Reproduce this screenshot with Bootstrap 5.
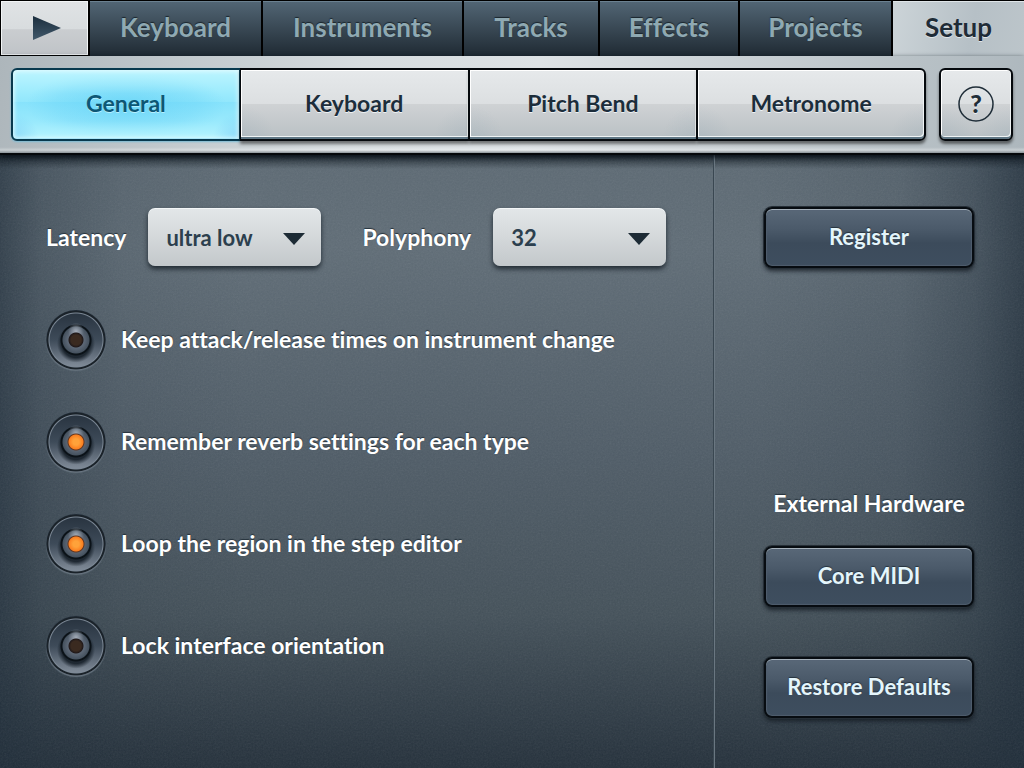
<!DOCTYPE html>
<html lang="en">
<head>
<meta charset="utf-8">
<meta name="viewport" content="width=device-width, initial-scale=1">
<title>Setup</title>
<link href="https://cdn.jsdelivr.net/npm/bootstrap@5.3.0/dist/css/bootstrap.min.css" rel="stylesheet">
<style>
  body {
    font-family: Lato, "Open Sans", sans-serif;
    font-weight: 700;
    font-size: 23px;
    line-height: 30px;
    font-variant-ligatures: none;
    color: #fff;
    background: #26323e;
  }

  /* top row of sections */
  .top-tabs {
    display: grid;
    grid-template-columns: 88fr 171fr 199fr 134fr 138fr 151fr 131fr;
    column-gap: 2px;
    height: 56px;
    padding-top: 1px;
    background: #000;
  }
  .top-tabs > * {
    display: flex;
    align-items: center;
    justify-content: center;
    padding: 0 0 4px;
    border: 0;
    border-radius: 0;
    font-size: 26px;
    text-decoration: none;
    color: #8fa9b2;
    text-shadow: 0 -1px 1px #1a252d;
    background: linear-gradient(#526675, #394854 50%, #1f2a33);
    box-shadow: inset 0 1px #6b8190;
  }
  .top-tabs > .active {
    color: #1f2c37;
    text-shadow: 0 1px #dfe5e8;
    background: linear-gradient(100deg, #ccd4d8, #b6c0c6 60%, #bcc5ca);
    box-shadow: inset 0 1px #dfe5e8;
  }
  .top-tabs > .play-btn {
    margin: 0 0 1px 1px;
    padding: 0 0 0 5px;
    background: linear-gradient(#e0e3e5, #d8dcde 52%, #cacdd0 53%, #bfc3c7);
    box-shadow: inset 0 0 0 1px #f2f5f6;
  }

  /* silver strip with the setup pages */
  .sub-bar {
    gap: 13px;
    padding: 12px 11px;
    border-bottom: 2px solid #05080b;
    background:
      linear-gradient(#fff0 94%, #ffffff50 97%, #8a9297),
      linear-gradient(100deg, #adb6bb, #d6dcdf 35%, #dde2e5 52%, #b8c1c6 88%, #adb7bd);
    box-shadow: 0 2px 5px #0b131a;
  }
  .sub-tabs { display: grid; grid-template-columns: repeat(4, 1fr); }
  .sub-tabs > *, .help-btn {
    display: flex;
    align-items: center;
    justify-content: center;
    height: 73px;
    padding: 0 0 4px;
    border: solid #05090d;
    border-width: 2px 1px;
    font-weight: 700;
    color: #1c2d3b;
    text-decoration: none;
    text-shadow: 0 1px #eef2f4;
    background:
      radial-gradient(circle at 0 100%, #93a7b344, #93a7b300 34px),
      radial-gradient(circle at 100% 100%, #93a7b344, #93a7b300 34px),
      linear-gradient(#e6e9eb, #dcdfe1 49%, #cfd2d4 50%, #b9c0c4);
    box-shadow: inset 0 -2px #5f7684, inset 1px 1px #fff, inset -1px -3px #f0f4f5, 0 3px 3px #1118;
  }
  .sub-tabs > :first-child { border-left-width: 2px; border-radius: 6px 0 0 6px; }
  .sub-tabs > :last-child { border-right-width: 2px; border-radius: 0 6px 6px 0; }
  .sub-tabs > .active {
    color: #0d5775;
    text-shadow: 0 1px #b4efff;
    border-color: #08394e;
    background:
      radial-gradient(circle at 0 100%, #79cdf6aa, #79cdf600 26px),
      radial-gradient(circle at 100% 100%, #79cdf6aa, #79cdf600 26px),
      linear-gradient(#bdf5ff, #bdf5ff00 34%, #52cff522 46%, #5fd2f855 47%, #7fdcf922 74%, #b6f4fe),
      radial-gradient(ellipse 100px 36px at center, #74d9f8, #8be3fb 70%, #9cebfd);
    box-shadow: inset 0 0 4px 1px #e5fcff, inset 0 -1px #5ac8ee, 0 1px 2px #7bbbd4;
  }
  .help-btn { width: 74px; padding-bottom: 2px; border-width: 2px; border-radius: 6px; }

  /* brushed panel */
  .panel {
    background:
      url("data:image/svg+xml,%3Csvg xmlns='http://www.w3.org/2000/svg' width='160' height='160'%3E%3Cfilter id='n'%3E%3CfeTurbulence type='fractalNoise' baseFrequency='.6' numOctaves='2' stitchTiles='stitch'/%3E%3CfeColorMatrix type='saturate' values='0'/%3E%3C/filter%3E%3Crect width='160' height='160' filter='url(%23n)' opacity='.1'/%3E%3C/svg%3E"),
      linear-gradient(#0b151dcc, #0b151d00 14px),
      linear-gradient(90deg, #1c2a37aa, #1c2a3755 4%, #1c2a3718 12%, #1c2a3700 24%, #1c2a3700 74%, #1c2a3722 88%, #1c2a3766 95%, #1c2a37bb),
      linear-gradient(#5c6973, #5f6c76 15%, #4e5b66 50%, #435059 75%, #232f3a);
  }
  .main-area { padding: 53px 46px 88px; }
  .side-area {
    width: 310px;
    padding: 52px 50px 50px 49px;
    border-left: 1px solid #6a7781;
    box-shadow: -1px 0 #3a4751;
  }
  .shade { text-shadow: 0 -1px 1px #26323c; }
  .options-row { gap: 41px; }
  .field-pair { gap: 22px; }
  .value-select {
    width: 173px;
    height: 58px;
    padding: 0 18px;
    border: 0;
    border-radius: 7px;
    font-size: 22px;
    font-weight: 700;
    color: #2c3f4e;
    background:
      url("data:image/svg+xml,%3Csvg xmlns='http://www.w3.org/2000/svg' width='22' height='12'%3E%3Cpath d='M0 0h22L11 12z' fill='%231d2b35'/%3E%3C/svg%3E") no-repeat right 16px top 25px,
      linear-gradient(#e3e7e9, #d4d8da 50%, #c3c8cb);
    box-shadow: inset 0 1px #f3f6f7, 0 3px 5px #111a22cc;
  }

  /* round lamp switches */
  .switch-list { display: grid; gap: 42px; margin-top: 44px; }
  .lamp-switch {
    appearance: none;
    flex: none;
    width: 60px;
    height: 60px;
    margin: 0;
    border-radius: 50%;
    --lamp: radial-gradient(circle at 50% 50%, #3a2a20 5px, #20191a 7px, #20191a00 8px);
    background:
      var(--lamp),
      radial-gradient(ellipse 8px 9px at 50% 36%, #a3acb8, #a3acb800),
      radial-gradient(circle at 50% 50%, #616c7b 7px, #46525f 13px, #0b1218 14px, #0b1218 15px, #0b121800 16px),
      radial-gradient(circle at 50% 56%, #131c25dd 14px, #131c2500 19px),
      radial-gradient(circle at 50% 50%, #fff0 26px, #7c8895 27px, #1a2229 28px, #1a2229 29px, #fff0 30px),
      linear-gradient(#26313d, #3e4b59 50%, #7d8895 92%);
    box-shadow: 0 1px 1px #65727d;
  }
  .lamp-switch:checked {
    --lamp: radial-gradient(circle at 50% 50%, #ffa23a 3px, #fb7f20 7px, #5e3420 8px, #5e342000 9px);
  }
  .switch-label { margin-left: 15px; padding-bottom: 2px; }

  .dark-btn {
    display: block;
    width: 100%;
    height: 61px;
    padding: 0 0 2px;
    border: 2px solid #070c11;
    border-radius: 8px;
    font-weight: 700;
    font-size: 22px;
    color: #e4f5fb;
    text-shadow: 0 -1px 1px #26323e;
    background: linear-gradient(#596878, #4b5a6a 35%, #3c4b5b 60%, #3e4e5f);
    box-shadow: inset 0 1px #a5b0ba, inset 0 0 1px 1px #4f5e6d, 0 0 0 1px #252e36, 0 3px 4px #11181fcc;
  }
  .midi-btn { margin-bottom: 50px; }
</style>
</head>
<body class="d-flex flex-column min-vh-100">

<nav class="top-tabs" aria-label="Sections">
  <button class="play-btn" type="button" aria-label="Play">
    <svg width="28" height="26" viewBox="0 0 28 26" aria-hidden="true">
      <defs><linearGradient id="playFill" x1="0" y1="0" x2="0" y2="1"><stop offset="0" stop-color="#1b2e3e"/><stop offset="1" stop-color="#41586a"/></linearGradient></defs>
      <path d="M0 1L28 13L0 25Z" fill="url(#playFill)"/>
    </svg>
  </button>
  <a href="#keyboard">Keyboard</a>
  <a href="#instruments">Instruments</a>
  <a href="#tracks">Tracks</a>
  <a href="#effects">Effects</a>
  <a href="#projects">Projects</a>
  <a href="#setup" class="active" aria-current="page">Setup</a>
</nav>

<div class="sub-bar d-flex position-relative">
  <nav class="sub-tabs flex-grow-1" aria-label="Setup pages">
    <a href="#general" class="active" aria-current="page">General</a>
    <a href="#setup-keyboard">Keyboard</a>
    <a href="#pitch-bend">Pitch Bend</a>
    <a href="#metronome">Metronome</a>
  </nav>
  <button class="help-btn" type="button" aria-label="Help">
    <svg width="38" height="38" viewBox="0 0 38 38" aria-hidden="true">
      <circle cx="19" cy="19" r="17" fill="none" stroke="#1f2d38" stroke-width="1.5"/>
      <text x="19" y="28" text-anchor="middle" font-size="25" font-weight="900" fill="#1f2d38">?</text>
    </svg>
  </button>
</div>

<div class="panel d-flex flex-grow-1">
  <main class="main-area flex-grow-1">
    <div class="options-row d-flex flex-wrap">
      <div class="field-pair d-flex align-items-center">
        <label class="shade" for="latency">Latency</label>
        <select id="latency" class="form-select value-select"><option>ultra low</option><option>low</option><option>normal</option></select>
      </div>
      <div class="field-pair d-flex align-items-center">
        <label class="shade" for="polyphony">Polyphony</label>
        <select id="polyphony" class="form-select value-select"><option>32</option><option>16</option><option>8</option></select>
      </div>
    </div>

    <div class="switch-list shade">
      <div class="d-flex align-items-center">
        <input class="lamp-switch" type="checkbox" id="keepTimes"><label class="switch-label" for="keepTimes">Keep attack/release times on instrument change</label>
      </div>
      <div class="d-flex align-items-center">
        <input class="lamp-switch" type="checkbox" id="reverb" checked><label class="switch-label" for="reverb">Remember reverb settings for each type</label>
      </div>
      <div class="d-flex align-items-center">
        <input class="lamp-switch" type="checkbox" id="loop" checked><label class="switch-label" for="loop">Loop the region in the step editor</label>
      </div>
      <div class="d-flex align-items-center">
        <input class="lamp-switch" type="checkbox" id="lock"><label class="switch-label" for="lock">Lock interface orientation</label>
      </div>
    </div>
  </main>

  <aside class="side-area d-flex flex-column flex-shrink-0">
    <button class="dark-btn" type="button">Register</button>
    <div class="mt-auto text-center shade mb-4 pb-1">External Hardware</div>
    <button class="dark-btn midi-btn" type="button">Core MIDI</button>
    <button class="dark-btn" type="button">Restore Defaults</button>
  </aside>
</div>

<script src="https://cdn.jsdelivr.net/npm/bootstrap@5.3.0/dist/js/bootstrap.bundle.min.js"></script>
</body>
</html>
